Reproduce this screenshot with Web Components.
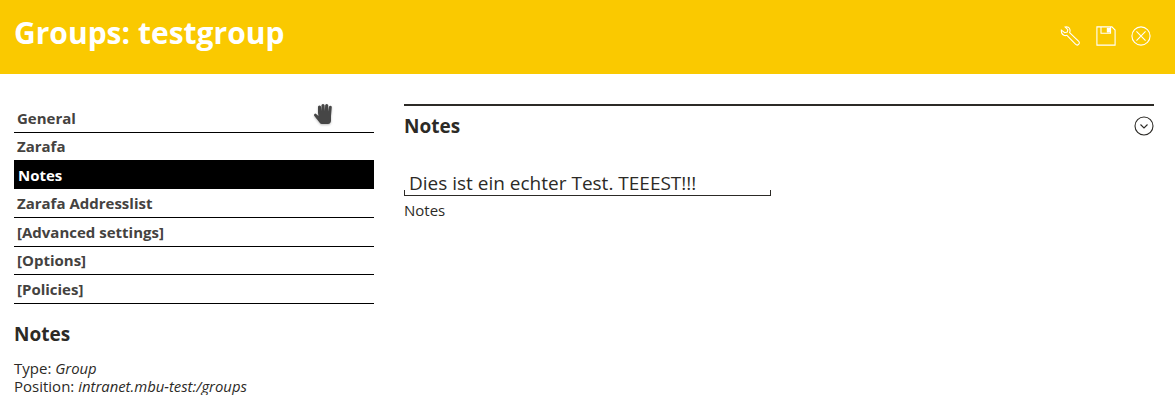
<!DOCTYPE html>
<html>
<head>
<meta charset="utf-8">
<style>
  html, body { margin: 0; padding: 0; background: #fff; }
  body { font-family: "Open Sans", sans-serif; color: #2c2a26; overflow: hidden; }
</style>
</head>
<body>
<app-header title="Groups: testgroup"></app-header>
<page-layout>
  <side-nav slot="side" active="Notes" items="General|Zarafa|Notes|Zarafa Addresslist|[Advanced settings]|[Options]|[Policies]"></side-nav>
  <info-box slot="side"></info-box>
  <notes-panel slot="main"></notes-panel>
</page-layout>
<script>
class AppHeader extends HTMLElement {
  connectedCallback() {
    this.attachShadow({ mode: 'open' });
    this.shadowRoot.innerHTML = `
      <style>
        :host { display: flex; align-items: center; justify-content: space-between; height: 74px; background: #fac900; color: #fff; padding: 0 24px 0 14px; box-sizing: border-box; }
        h1 { margin: 0 0 8px; font: 700 30px/40px "Open Sans", sans-serif; }
        .icons { display: flex; gap: 15.500px; margin-top: -3px; }
        svg { width: 20px; height: 20px; fill: none; stroke: #fff; stroke-width: 1.200; display: block; }
      </style>
      <h1>${this.getAttribute('title')}</h1>
      <div class="icons">
        <svg viewBox="0 0 22 22"><path d="M1.500 4.500 5.200 7.400 8 6.600 8.600 4 5.600 1.200C8 .4 10.600 1.600 11 4.200 11.200 5.400 11 6.400 10.600 7.200L20.600 16.800C21.600 18 21.400 19.400 20.400 20.200 19.400 21.200 18 21 17 20L7.600 10.200C6.600 10.600 5.400 10.800 4.200 10.200 2.400 9.400 1.300 6.600 1.500 4.500Z"/></svg>
        <svg viewBox="0 0 22 22"><path d="M1 1H17.500L21 4.500V21H1Z"/><path d="M5.500 1V8H16V1" /><path d="M12.500 2.500H15V6.500H12.500Z" fill="#fff"/></svg>
        <svg viewBox="0 0 22 22"><circle cx="11" cy="11" r="10"/><path d="M6 6 16 16M16 6 6 16"/></svg>
      </div>`;
  }
}

class PageLayout extends HTMLElement {
  connectedCallback() {
    this.attachShadow({ mode: 'open' });
    this.shadowRoot.innerHTML = `
      <style>
        :host { display: grid; grid-template-columns: 360px 750px; column-gap: 30px; padding: 30px 0 0 14px; position: relative; }
        /* cursor sits over the nav, so this one stays absolute */
        .hand { position: absolute; left: 311px; top: 27px; width: 24px; height: 27px; filter: drop-shadow(0 1px 1px rgba(0,0,0,.25)) blur(.3px); }
      </style>
      <div><slot name="side"></slot></div>
      <div><slot name="main"></slot></div>
      <svg class="hand" viewBox="0 0 24 27">
        <path fill="#464646" d="M7 12V5.500Q8.500 3.500 10 5.500L10.500 10V4Q12 2 13.500 4L13.800 10 14.200 4Q15.700 2 17.200 4V10.500L18 5.500Q19.700 4 20.800 5.800L20 15V20Q19.500 23 17 23H11Q9.500 23 8.500 21.500L3.200 14.800Q2.500 12.800 4.500 12.500L7.500 15Z"/>
      </svg>`;
  }
}

class SideNav extends HTMLElement {
  connectedCallback() {
    this.attachShadow({ mode: 'open' });
    const active = this.getAttribute('active');
    const rows = this.getAttribute('items').split('|').map(name =>
      `<div class="row${name === active ? ' on' : ''}">${name}</div>`).join('');
    this.shadowRoot.innerHTML = `
      <style>
        :host { display: block; }
        .row { height: 28.500px; box-sizing: border-box; padding: 3.750px 3px 0; font: 700 15px/20px "Open Sans", sans-serif; color: #444240; border-bottom: 1px solid #000; }
        .on { background: #000 padding-box; color: #fff; padding-left: 4px; border-bottom-color: #fff; }
      </style>
      ${rows}`;
  }
}

class InfoBox extends HTMLElement {
  connectedCallback() {
    this.attachShadow({ mode: 'open' });
    this.shadowRoot.innerHTML = `
      <style>
        :host { display: block; margin-top: 17px; font: 400 15px/18px "Open Sans", sans-serif; }
        h2 { margin: 0 0 12px; font: 700 19px/26px "Open Sans", sans-serif; }
        i { font-size: 14.850px; }
      </style>
      <h2>Notes</h2>
      <div>Type: <i>Group</i></div>
      <div>Position: <i>intranet.mbu-test:/groups</i></div>`;
  }
}

class NotesPanel extends HTMLElement {
  connectedCallback() {
    this.attachShadow({ mode: 'open' });
    this.shadowRoot.innerHTML = `
      <style>
        :host { display: block; border-top: 2px solid #2c2a26; }
        .head { display: flex; align-items: center; justify-content: space-between; padding-top: 4px; height: 32px; }
        h2 { margin: 0; font: 700 19px/26px "Open Sans", sans-serif; }
        svg { width: 20px; height: 20px; fill: none; stroke: #2c2a26; stroke-width: 1.100; display: block; }
        .field { width: 367px; height: 26px; margin-top: 28px; padding-left: 5px; box-sizing: border-box; font: 400 19px/26px "Open Sans", sans-serif; white-space: nowrap;
          background:
            linear-gradient(#2c2a26, #2c2a26) left bottom / 100% 1px no-repeat,
            linear-gradient(#2c2a26, #2c2a26) left bottom / 1px 6px no-repeat,
            linear-gradient(#2c2a26, #2c2a26) right bottom / 1px 6px no-repeat; }
        label { display: block; margin-top: 4px; font: 400 15px/20px "Open Sans", sans-serif; }
      </style>
      <div class="head">
        <h2>Notes</h2>
        <svg viewBox="0 0 20 20"><circle cx="10" cy="10" r="9"/><path d="M6.500 8.500 10 12 13.500 8.500"/></svg>
      </div>
      <div class="field">Dies ist ein echter Test. TEEEST!!!</div>
      <label>Notes</label>`;
  }
}

customElements.define('app-header', AppHeader);
customElements.define('page-layout', PageLayout);
customElements.define('side-nav', SideNav);
customElements.define('info-box', InfoBox);
customElements.define('notes-panel', NotesPanel);
</script>
</body>
</html>
